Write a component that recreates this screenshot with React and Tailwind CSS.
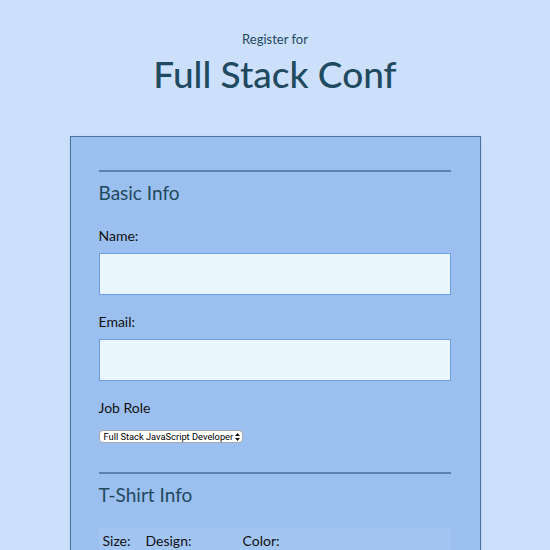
export default function App() {
  const font = { fontFamily: "Lato, 'Noto Sans', sans-serif" };
  return (
    <div className="min-h-screen bg-[#cde0fb] overflow-hidden" style={font}>
      <div className="pt-[31px] text-center text-[#1f4a5f]">
        <div className="text-[13px] leading-[16px]">Register for</div>
        <h1 className="mt-[5px] text-[37px] leading-[44px] font-medium">Full Stack Conf</h1>
      </div>
      <div className="mx-auto mt-[40px] w-[411px] border border-[#4a74a0] bg-[#9bbfee] pl-[28px] pr-[29px] pt-[33px] pb-[40px] shadow-sm">
        <div className="h-[2px] bg-[#5a83ad]"></div>
        <div className="mt-[9px] text-[19px] leading-[24px] text-[#1f4a5f]">Basic Info</div>
        <div className="mt-[21px] text-[14px] leading-[20px] text-[#111]">Name:</div>
        <div className="mt-[7px] h-[42px] border border-[#6e9edf] bg-[#eaf6fd]"></div>
        <div className="mt-[17px] text-[14px] leading-[20px] text-[#111]">Email:</div>
        <div className="mt-[7px] h-[42px] border border-[#6e9edf] bg-[#eaf6fd]"></div>
        <div className="mt-[17px] text-[14px] leading-[20px] text-[#111]">Job Role</div>
        <div className="mt-[12px] flex">
          <div
            className="flex h-[13px] items-center gap-[2px] rounded-[4px] border border-[#a8a8a8] bg-white pl-[4px] pr-[2px] text-[9.3px] leading-[11px] text-black"
            style={{ fontFamily: "Roboto, 'Liberation Sans', sans-serif" }}
          >
            <span>Full Stack JavaScript Developer</span>
            <svg width="5" height="8" viewBox="0 0 5 8">
              <path d="M2.5 0 L5 3 L0 3 Z" fill="#111" />
              <path d="M2.5 8 L5 5 L0 5 Z" fill="#111" />
            </svg>
          </div>
        </div>
        <div className="mt-[29px] h-[2px] bg-[#5a83ad]"></div>
        <div className="mt-[9px] text-[19px] leading-[24px] text-[#1f4a5f]">T-Shirt Info</div>
        <div className="mt-[21px] flex bg-[#a3c5f1] pt-[3px] pb-[8px] pl-[4px] text-[14px] leading-[20px] text-[#111]">
          <span className="w-[43px]">Size:</span>
          <span className="w-[97px]">Design:</span>
          <span>Color:</span>
        </div>
      </div>
    </div>
  );
}
